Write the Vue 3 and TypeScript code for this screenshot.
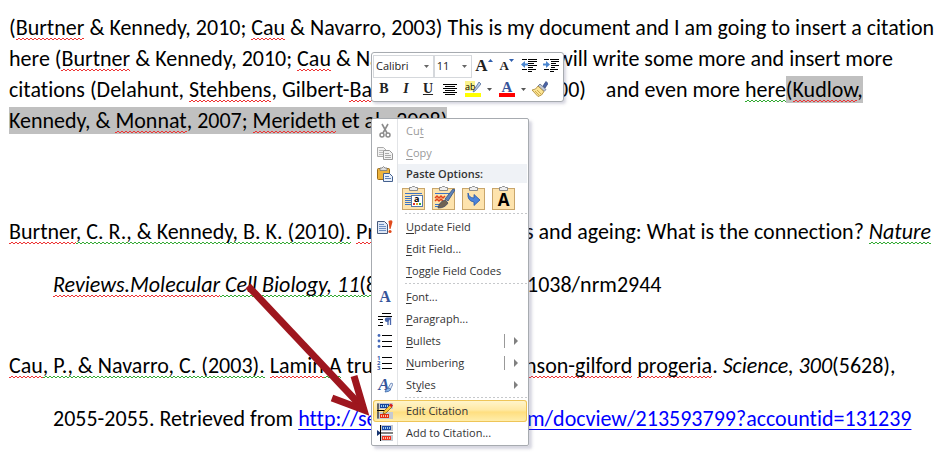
<script setup lang="ts">
interface MenuRow {
  label: string
  key?: string
  icon: string
  arrow?: boolean
  split?: boolean
  active?: boolean
}

const editRows: MenuRow[] = [
  { label: 'Cut', key: 't', icon: 'cut' },
  { label: 'Copy', key: 'C', icon: 'copy' },
]

const groups: MenuRow[][] = [
  [
    { label: 'Update Field', key: 'U', icon: 'update' },
    { label: 'Edit Field...', key: 'E', icon: '' },
    { label: 'Toggle Field Codes', key: 'T', icon: '' },
  ],
  [
    { label: 'Font...', key: 'F', icon: 'font' },
    { label: 'Paragraph...', key: 'P', icon: 'paragraph' },
    { label: 'Bullets', key: 'B', icon: 'bullets', arrow: true, split: true },
    { label: 'Numbering', key: 'N', icon: 'numbering', arrow: true, split: true },
    { label: 'Styles', key: 'y', icon: 'styles', arrow: true },
  ],
  [
    { label: 'Edit Citation', icon: 'editcite', active: true },
    { label: 'Add to Citation...', icon: 'addcite' },
  ],
]

const pasteOptions = ['Use Destination Styles', 'Keep Source Formatting', 'Merge Formatting', 'Keep Text Only']

function parts(row: MenuRow): [string, string, string] {
  const at = row.key ? row.label.indexOf(row.key) : -1
  if (at < 0) return [row.label, '', '']
  return [row.label.slice(0, at), row.label[at], row.label.slice(at + 1)]
}
</script>

<template>
  <main class="page">
    <article class="document">
      <div class="body-text">
        <p class="line">(<span class="sp">Burtner</span> &amp; Kennedy, 2010; <span class="sp">Cau</span> &amp; Navarro, 2003) This is my document and I am going to insert a citation</p>
        <p class="line"><span class="head">here (<span class="sp">Burtner</span> &amp; Kennedy, 2010; <span class="sp">Cau</span> &amp; Na</span><span>will write some more and insert more</span></p>
        <p class="line"><span class="head">citations (Delahunt, <span class="sp">Stehbens</span>, Gilbert-<span class="sp">Ba</span></span><span>00)&nbsp;&nbsp;&nbsp; and even more <span class="gr">here</span><mark>(<span class="sp">Kudlow</span>,</mark></span></p>
        <p class="line"><mark>Kennedy, &amp; <span class="sp">Monnat</span>, 2007; <span class="sp">Merideth</span> et al., 2008)</mark></p>
      </div>
      <div class="references">
        <div class="entry">
          <p class="line"><span class="head"><span class="sp">Burtner</span><span class="gr">, C. R., &amp; Kennedy, B. K. (2010).</span> <span class="sp">Pr</span></span><span>s and ageing: What is the connection? <i class="gr">Nature</i></span></p>
          <p class="line hang"><span class="head"><i><span class="sp">Reviews.Molecular</span><span class="gr"> Cell Biology, 11</span></i><span class="gr">(8</span></span><span>1038/nrm2944</span></p>
        </div>
        <div class="entry">
          <p class="line"><span class="head"><span class="sp">Cau</span><span class="gr">, P., &amp; Navarro, C. (2003).</span> <span class="sp">Lamin</span><span class="gr"> A</span> tru</span><span><span class="sp">nson-gilford</span> <span class="sp">progeria</span>. <i>Science, 300</i>(5628),</span></p>
          <p class="line hang"><span class="head">2055-2055. Retrieved from <a href="#citation">http://se</a></span><a href="#citation">m/docview/213593799?accountid=131239</a></p>
        </div>
      </div>
    </article>

    <svg class="pointer" viewBox="0 0 130 140" aria-hidden="true">
      <path d="M6 7L119 127" />
      <path d="M90 119L122 131L112 97" />
    </svg>

    <section class="toolbar" aria-label="Formatting">
      <div class="tools">
        <label class="pick family"><select aria-label="Font family"><option>Calibri</option></select><svg viewBox="0 0 5 3"><path d="M0 0h5L2.5 3z" /></svg></label>
        <label class="pick size"><select aria-label="Font size"><option>11</option></select><svg viewBox="0 0 5 3"><path d="M0 0h5L2.5 3z" /></svg></label>
        <button class="tool wide" aria-label="Grow font"><span class="serif big">A</span><svg class="caret" viewBox="0 0 5 3"><path d="M0 3h5L2.5 0z" /></svg></button>
        <button class="tool wide" aria-label="Shrink font"><span class="serif small">A</span><svg class="caret" viewBox="0 0 5 3"><path d="M0 0h5L2.5 3z" /></svg></button>
        <button class="tool" aria-label="Decrease indent">
          <svg class="glyph" viewBox="0 0 16 16"><path class="ink" d="M1 1.5h5M7 1.5h9M7 3.500h9M7 5.500h6M7 7.500h9M7 9.500h5M1 11.500h5M7 11.500h8M7 13.500h4" /><path d="M0 6.500L4 3v2.500h3v2H4V10z" fill="#4a86d0" /></svg>
        </button>
        <button class="tool" aria-label="Increase indent">
          <svg class="glyph" viewBox="0 0 16 16"><path class="ink" d="M1 1.5h5M7 1.5h9M8 3.500h8M8 5.500h5M8 7.500h8M8 9.500h4M1 11.500h5M7 11.500h8M7 13.500h4" /><path d="M7 6.500L3 3v2.500H0v2h3V10z" fill="#4a86d0" /></svg>
        </button>
      </div>
      <div class="tools second">
        <button class="tool serif bold" aria-label="Bold">B</button>
        <button class="tool serif ital" aria-label="Italic">I</button>
        <button class="tool serif under" aria-label="Underline">U</button>
        <button class="tool" aria-label="Center">
          <svg class="glyph" viewBox="0 0 16 16"><path class="ink" d="M1 3.5h14M3 5.5h10M1 7.5h14M3 9.5h10M1 11.5h14M3 13.5h10" /></svg>
        </button>
        <button class="tool combo" aria-label="Highlight colour">
          <svg class="glyph" viewBox="0 0 16 16"><rect width="10" height="10" fill="#fbf38c" /><text x="0" y="9" font-size="9">ab</text><path d="M9 9L14 1l2 2-6 7-2 1z" fill="#b9cbe4" stroke="#53709d" stroke-width=".8" /><rect y="12" width="16" height="4" fill="#ff0" /></svg>
          <svg class="drop" viewBox="0 0 5 3"><path d="M0 0h5L2.5 3z" /></svg>
        </button>
        <button class="tool combo" aria-label="Font colour">
          <svg class="glyph" viewBox="0 0 16 16"><text x="8" y="11" class="letter" text-anchor="middle" font-size="15">A</text><rect y="12" width="16" height="4" fill="#f00" /></svg>
          <svg class="drop" viewBox="0 0 5 3"><path d="M0 0h5L2.5 3z" /></svg>
        </button>
        <button class="tool" aria-label="Format painter">
          <svg class="glyph" viewBox="0 0 16 16"><path d="M11 5l3-4.500 2 2L13 7z" fill="#4a64a8" stroke="#33477e" stroke-width=".8" /><path d="M8 3l6 5.500-2 2L6 5z" fill="#c3c8d4" stroke="#5b6b8a" stroke-width=".8" /><path d="M6 5l6 5.500Q10 15 6 15.500L0 9q4 0 6-4z" fill="#fbe494" stroke="#a8832e" stroke-width=".8" /><path d="M3 10l4 4M5 9l4 4" stroke="#c79c3a" stroke-width=".8" /></svg>
        </button>
      </div>
    </section>

    <nav class="menu" aria-label="Context menu">
      <button v-for="row in editRows" :key="row.label" class="item" disabled>
        <span class="icon">
          <svg v-if="row.icon === 'cut'" viewBox="0 0 16 16"><path d="M5 1l5 9M11 1L6 10" fill="none" stroke="#8c8c8c" stroke-width="1.600" /><circle cx="5" cy="12" r="2" fill="none" stroke="#8c8c8c" stroke-width="1.500" /><circle cx="11" cy="12" r="2" fill="none" stroke="#8c8c8c" stroke-width="1.500" /></svg>
          <svg v-else viewBox="0 0 16 16"><path d="M.5 2.500h6l3 3v6h-9z" fill="#f2f2f2" stroke="#aaa" /><path d="M2 5.500h4M2 7.500h4M2 9.500h4" stroke="#bbb" /><path d="M6.500 5.500h6l3 3v6h-9z" fill="#f2f2f2" stroke="#999" /><path d="M8 8.500h4M8 10.500h6M8 12.500h6" stroke="#aaa" /></svg>
        </span>
        <span class="text">{{ parts(row)[0] }}<u>{{ parts(row)[1] }}</u>{{ parts(row)[2] }}</span>
      </button>
      <div class="item title">
        <span class="icon"><svg viewBox="0 0 16 16"><rect x=".5" y="2.500" width="12" height="11" rx="1" fill="#edb33c" stroke="#9a6b18" /><path d="M3 4.500V2h2l1.500-1.500L8 2h2v2.500z" fill="#ddd" stroke="#777" stroke-width=".8" /><path d="M6.500 7.500h6l3 3v5h-9z" fill="#e8f0fb" stroke="#45618f" /><path d="M8 10.500h4M8 12.500h6" stroke="#5f82b8" /></svg></span>
        <span class="text">Paste Options:</span>
      </div>
      <div class="item pastes">
        <span class="icon"></span>
        <span class="options">
          <button v-for="(name, i) in pasteOptions" :key="name" class="paste" :aria-label="name">
            <svg viewBox="0 0 23 24">
              <rect x=".5" y="2.500" width="22" height="21" fill="#fde3ad" stroke="#c9a66b" />
              <path d="M7.500 4.500v-3h2L10.500.5h2l1 1h2v3z" fill="#eee" stroke="#8b8b8b" />
              <g v-if="i === 0"><path d="M3 7.500h17M3 10.500h6M3 12.500h6M3 14.500h6M3 16.500h6M3 18.500h6" stroke="#3d74c4" /><rect x="9.500" y="9.500" width="11" height="11" fill="#fff" stroke="#5579ad" /><text x="12" y="16" font-size="9" font-weight="bold">a</text><path d="M11 17h2v2h-2z" fill="#d33" /><path d="M14 17h2v2h-2z" fill="#e8a020" /><path d="M17 17h2v2h-2z" fill="#3a3" /></g>
              <g v-else-if="i === 1"><path d="M3 7.500h17M3 18.500h8M3 20.500h6" stroke="#3d74c4" /><path d="M3 12l2-2 2 2 2-2 2 2 2-2M3 15l2-2 2 2 2-2 2 2" fill="none" stroke="#e0431c" stroke-width="1.500" /><path d="M13 13L21 3l2 1-7 11z" fill="#5f82b8" stroke="#2f4f82" stroke-width=".8" /><path d="M6 22q1-6 7-8l3 3q-3 5-10 5z" fill="#6f6253" stroke="#3f4a63" stroke-width=".8" /></g>
              <path v-else-if="i === 2" d="M6 7q1 5 6 5V8.500l6 5.500-6 5.500V16Q5 15 6 7z" fill="#4c84da" stroke="#2456a8" stroke-width=".8" />
              <text v-else x="11.500" y="20" text-anchor="middle" font-size="17" font-weight="bold">A</text>
            </svg>
          </button>
        </span>
      </div>
      <template v-for="(group, g) in groups" :key="g">
        <hr />
        <button v-for="row in group" :key="row.label" class="item" :class="{ active: row.active }">
          <span class="icon">
            <svg v-if="row.icon === 'update'" viewBox="0 0 16 16"><path d="M.5 2.500h7l3 3v9H.5z" fill="#dfe8f6" stroke="#465a7c" /><path d="M2 5.500h5M2 7.500h7M2 9.500h7M2 11.500h7" stroke="#6d8fc2" /><path d="M11.500 2q4-2 4 1l-2 7h-1z" fill="#e04a1c" /><circle cx="13" cy="12.500" r="1.600" fill="#e04a1c" /></svg>
            <svg v-else-if="row.icon === 'font'" viewBox="0 0 16 16"><text x="8" y="13" class="letter" text-anchor="middle" font-size="16">A</text></svg>
            <svg v-else-if="row.icon === 'paragraph'" viewBox="0 0 16 16"><path class="ink" d="M5 2.500h9M1 5.500h14M1 8.500h5M3 11.500h3M1 14.500h5" /><path d="M11 7v7M13.500 7v7" stroke="#4a67ac" stroke-width="1.300" /><path d="M14.500 6.500H10a2 2 0 0 0 0 4.500h1z" fill="#4a67ac" /></svg>
            <svg v-else-if="row.icon === 'bullets'" viewBox="0 0 16 16"><path class="ink" d="M5 2.500h10M5 8.500h10M5 13.500h10" /><circle cx="2" cy="2.500" r="1.400" fill="#4468b8" /><circle cx="2" cy="8" r="1.400" fill="#4468b8" /><circle cx="2" cy="13.500" r="1.400" fill="#4468b8" /></svg>
            <svg v-else-if="row.icon === 'numbering'" viewBox="0 0 16 16"><path class="ink" d="M5 2.500h10M5 8.500h10M5 13.500h10" /><g fill="#3558a8" font-size="6" font-weight="bold"><text x="0" y="5">1</text><text x="0" y="10">2</text><text x="0" y="15">3</text></g></svg>
            <svg v-else-if="row.icon === 'styles'" viewBox="0 0 16 16"><text x="7" y="13" class="letter slant" text-anchor="middle" font-size="17">A</text><path d="M11 11l3-5 2 1-3 6z" fill="#e6edf8" stroke="#5d7bb0" stroke-width=".8" /><path d="M8 15q1-4 4-4l2 1.500Q12 15 8 15z" fill="#88b4ea" stroke="#3e66a5" stroke-width=".8" /></svg>
            <svg v-else-if="row.icon === 'editcite'" viewBox="0 0 16 16"><path d="M0 0h16v6H0zM0 9h16v7H0z" fill="#c5c9d0" /><rect x="3" y="1" width="9" height="4" fill="#14459c" /><path d="M4 3h8" stroke="#9fd0ea" stroke-dasharray="1 1" stroke-width="2" /><rect x="3" y="11" width="9" height="4" fill="#e42b12" /><path d="M4 13h8" stroke="#ffc0a0" stroke-dasharray="1 1" stroke-width="2" /><path class="ink" d="M0 7.500h8M1 .5v15" /><path d="M6 11l1-3 6-6 2 2-6 6z" fill="#f9c83d" stroke="#7a5212" stroke-width=".7" /><path d="M12 2l2-1.500 2 2-1.500 2z" fill="#d61e1e" /></svg>
            <svg v-else-if="row.icon === 'addcite'" viewBox="0 0 16 16"><path d="M3 0h13v6H3zM3 10h13v6H3z" fill="#c5c9d0" /><rect x="5" y="1" width="9" height="4" fill="#1b4aab" /><path d="M6 3h8" stroke="#9fd0ea" stroke-dasharray="1 1" stroke-width="2" /><rect x="5" y="11" width="9" height="4" fill="#ee3420" /><path d="M6 13h8" stroke="#ffc0a0" stroke-dasharray="1 1" stroke-width="2" /><path d="M0 5l4 3-4 3z" fill="#15336f" /><path class="ink" d="M3 8h13M3.500 0v16" /></svg>
          </span>
          <span class="text">{{ parts(row)[0] }}<u>{{ parts(row)[1] }}</u>{{ parts(row)[2] }}</span>
          <span v-if="row.arrow" class="more" :class="{ split: row.split }"><svg viewBox="0 0 4 8"><path d="M0 0l4 4-4 4z" /></svg></span>
        </button>
      </template>
    </nav>
  </main>
</template>

<style>
body {
  background: #fff;
}
</style>

<style scoped>
.page {
  position: relative;
  min-height: 461px;
  overflow: hidden;
  color: #000;
  font-family: Carlito, Lato, sans-serif;
  font-size: 22px;
  font-variant-ligatures: none;
}

.document {
  padding: 12px 0 0 9px;
}

p {
  margin: 0;
}

.line {
  display: flex;
  white-space: pre;
}

.body-text .line {
  display: block;
  line-height: 31px;
}

.body-text .head {
  display: inline-block;
  width: 548px;
}

.references {
  padding-top: 69px;
}

.references .line {
  line-height: 53px;
}

.references .head {
  flex: none;
  width: 516px;
}

.entry + .entry {
  margin-top: 28px;
}

.references .hang {
  padding-left: 44px;
}

.references .hang .head {
  width: 474px;
}

.sp,
.gr {
  --wave: #e33;
  background:
    repeating-linear-gradient(90deg, var(--wave) 0 2px, transparent 2px 4px) 0 calc(100% - 1px) / 100% 1px no-repeat,
    repeating-linear-gradient(90deg, transparent 0 2px, var(--wave) 2px 4px) 0 calc(100% - 2px) / 100% 1px no-repeat;
}

.gr {
  --wave: #3a3;
}

mark {
  background: #c0c0c0;
  color: inherit;
}

a {
  color: #00f;
  text-underline-offset: 3px;
  text-decoration-thickness: 1px;
  text-decoration-skip-ink: none;
}

.pointer {
  position: absolute;
  top: 279px;
  left: 242px;
  width: 130px;
  height: 140px;
  fill: none;
  stroke: #9e161e;
  stroke-width: 7px;
}

.toolbar {
  position: absolute;
  top: 52px;
  left: 371px;
  box-sizing: border-box;
  width: 193px;
  padding: 1px;
  border: 1px solid #a7abb0;
  border-radius: 3px;
  background: #fff;
  box-shadow: 2px 2px 3px rgb(90 90 130 / 25%);
  font-family: "Open Sans", sans-serif;
  font-size: 11px;
}

.tools {
  display: flex;
  align-items: center;
  height: 24px;
}

.tools.second {
  height: 22px;
}

.pick {
  position: relative;
  box-sizing: border-box;
  height: 23px;
  border: 1px solid #d5d8dc;
}

.family {
  width: 61px;
}

.size {
  width: 39px;
}

.pick select {
  display: block;
  width: 100%;
  height: 19px;
  padding: 0 2px;
  border: 0;
  appearance: none;
  background: transparent;
  color: #222;
  font: inherit;
}

.pick svg {
  position: absolute;
  top: 9px;
  right: 4px;
  width: 5px;
  height: 3px;
  fill: #666;
}

button {
  margin: 0;
  padding: 0;
  border: 0;
  background: transparent;
  color: inherit;
  font: inherit;
}

.tool {
  display: flex;
  align-items: center;
  justify-content: center;
  width: 22px;
  height: 22px;
}

.tool.wide {
  width: 23px;
}

.tool.combo {
  gap: 6px;
  width: 34px;
}

.glyph {
  width: 16px;
  height: 16px;
}

.drop,
.caret {
  width: 5px;
  height: 3px;
  fill: #555;
}

.caret {
  align-self: flex-start;
  margin-top: 4px;
  fill: #2f5fae;
}

.serif {
  color: #222;
  font-family: "Liberation Serif", serif;
  font-size: 14px;
  font-weight: bold;
}

.big {
  font-size: 17px;
}

.small {
  font-size: 13px;
}

.ital {
  font-style: italic;
}

.under {
  text-decoration: underline;
}

.ink {
  fill: none;
  stroke: #000;
}

.letter {
  fill: #36549a;
  font-family: "Liberation Serif", serif;
  font-weight: bold;
}

.slant {
  font-style: italic;
}

.menu {
  position: absolute;
  top: 118px;
  left: 371px;
  box-sizing: border-box;
  width: 158px;
  padding: 1px;
  border: 1px solid #a7abb0;
  border-radius: 2px;
  background: linear-gradient(90deg, #fff 25px, #e2e4e7 25px 26px, #fff 26px);
  box-shadow: 3px 3px 3px rgb(90 90 130 / 25%);
  color: #333;
  font-family: "Open Sans", sans-serif;
  font-size: 11px;
}

.item {
  display: flex;
  align-items: center;
  box-sizing: border-box;
  width: 100%;
  height: 22px;
  text-align: left;
}

.item:disabled {
  color: #9a9a9a;
}

.icon {
  flex: none;
  display: flex;
  justify-content: center;
  width: 24px;
}

.icon svg {
  width: 16px;
  height: 16px;
}

.text {
  flex: 1;
  padding: 0 0 2px 9px;
}

u {
  text-underline-offset: 2px;
}

.title {
  height: 19px;
  background: linear-gradient(90deg, transparent 25px, #eff2f6 25px);
  font-weight: 600;
}

.title .text {
  padding-bottom: 0;
}

.pastes {
  height: 29px;
}

.options {
  display: flex;
  gap: 7px;
  padding-left: 5px;
}

.paste,
.paste svg {
  display: block;
  width: 23px;
  height: 24px;
}

hr {
  height: 1px;
  margin: 1px 0 2px 32px;
  border: 0;
  background: repeating-linear-gradient(90deg, #c6c8cb 0 2px, transparent 2px 4px);
}

.active {
  border-radius: 3px;
  background: linear-gradient(#fff6cf, #ffe9a4 45%, #ffdf80 55%, #ffefb0);
  box-shadow: inset 0 0 0 1px #eec558;
}

.more {
  display: flex;
  align-items: center;
  height: 14px;
  margin-right: 9px;
}

.more.split {
  padding-left: 9px;
  border-left: 1px solid #999;
}

.more svg {
  width: 4px;
  height: 8px;
  fill: #808080;
}
</style>
